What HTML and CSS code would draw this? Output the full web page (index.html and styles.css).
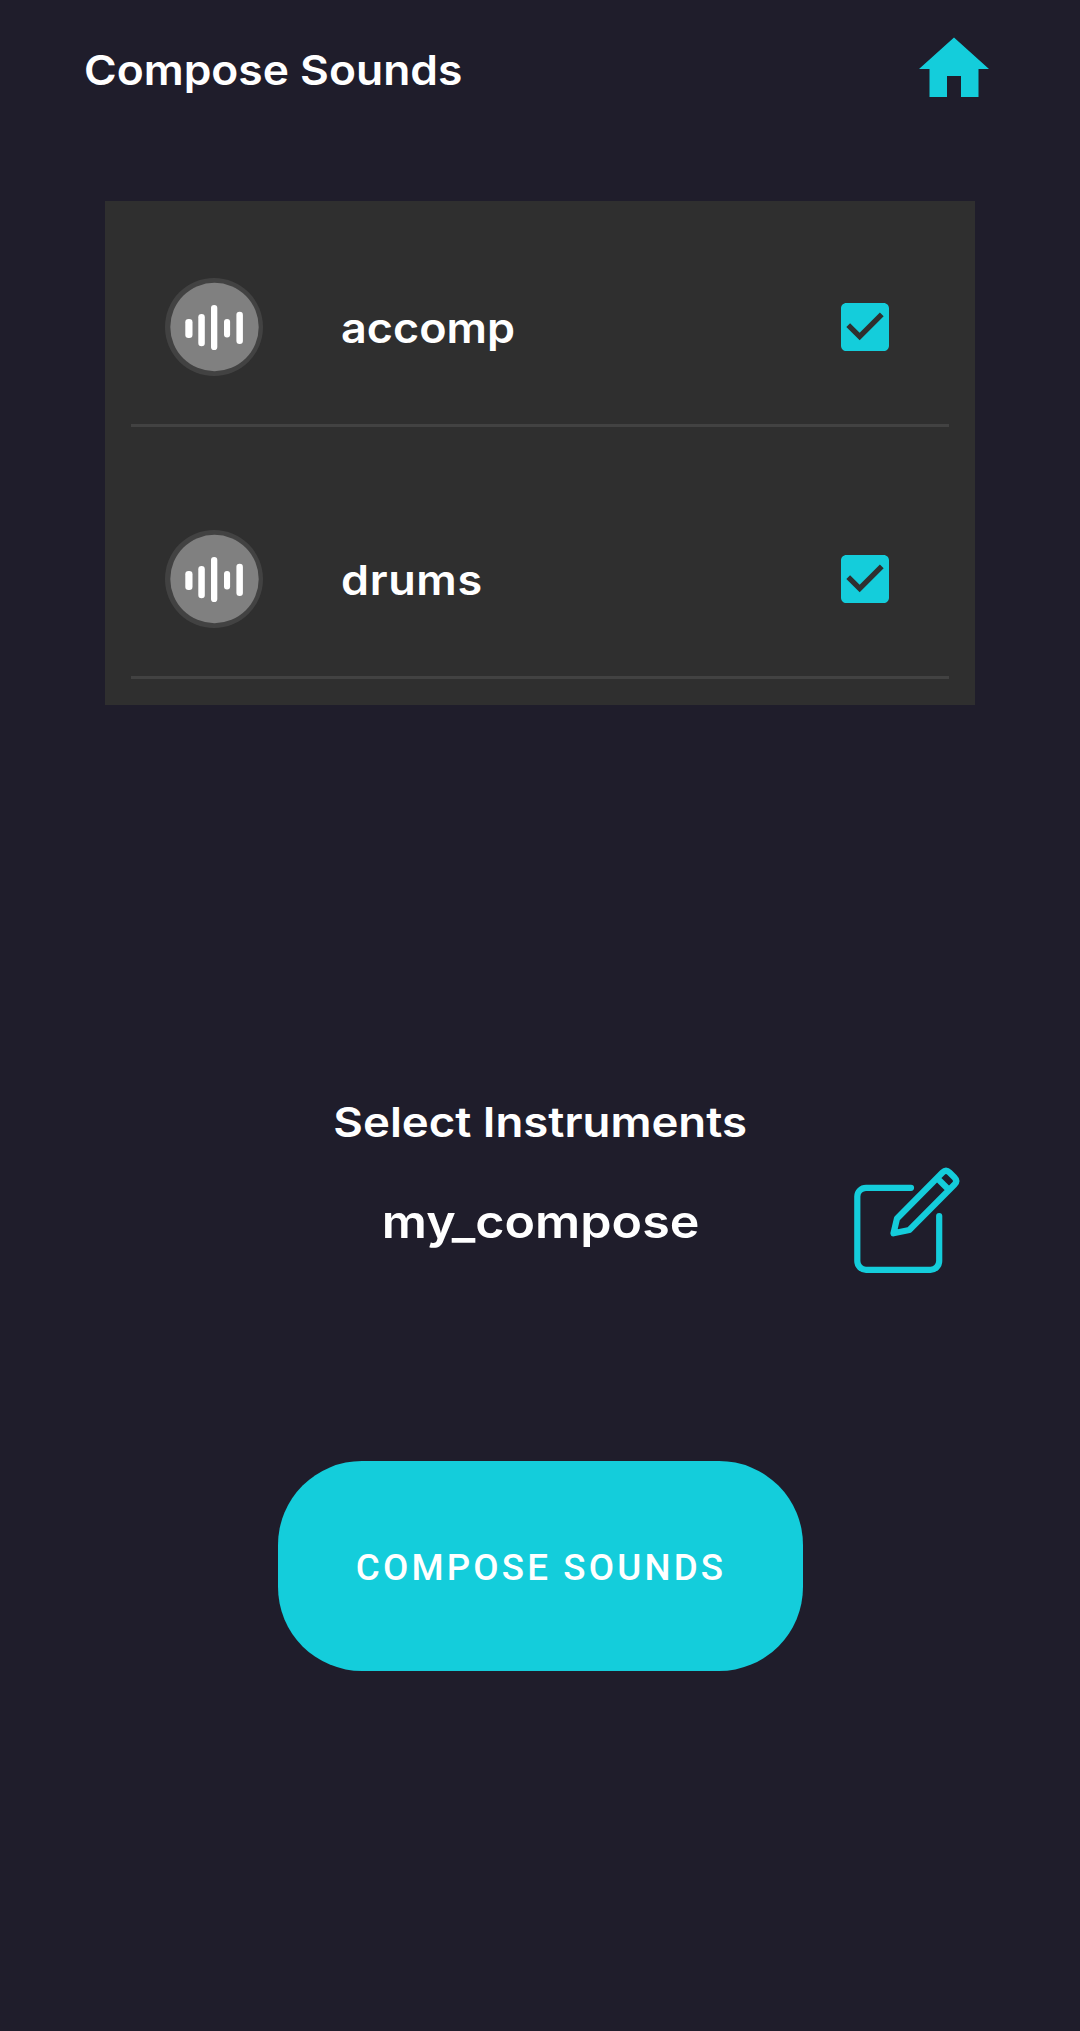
FILE: index.html
```html
<!DOCTYPE html>
<html lang="en">
<head>
<meta charset="utf-8">
<title>Compose Sounds</title>
<link rel="stylesheet" href="styles.css">
</head>
<body>
<svg class="symbols" aria-hidden="true">
  <symbol id="wave" viewBox="0 0 98 98">
    <circle class="wave-ring" cx="49" cy="49" r="49"/>
    <circle class="wave-disc" cx="49.5" cy="49" r="44.2"/>
    <g class="wave-bars">
      <rect x="20.3" y="41" width="7.2" height="19" rx="3.3"/>
      <rect x="33.3" y="36" width="6.5" height="32.3" rx="3.2"/>
      <rect x="46" y="27" width="6.3" height="45" rx="3.1"/>
      <rect x="59" y="41" width="6.1" height="18.4" rx="3"/>
      <rect x="71.4" y="33.7" width="6.5" height="32.3" rx="3.2"/>
    </g>
  </symbol>
  <symbol id="checked" viewBox="0 0 24 24">
    <path d="M19 3H5c-1.11 0-2 .9-2 2v14c0 1.1.89 2 2 2h14c1.11 0 2-.9 2-2V5c0-1.1-.89-2-2-2zm-9 14l-5-5 1.41-1.41L10 14.17l7.59-7.59L19 8l-9 9z"/>
  </symbol>
</svg>
<header class="topbar">
  <h1 class="title">Compose Sounds</h1>
  <svg class="home" viewBox="0 0 24 24"><path d="M10 20v-6h4v6h5v-8h3L12 3 2 12h3v8z"/></svg>
</header>
<main class="content">
  <ul class="tracks">
    <li class="track">
      <svg class="track-icon"><use href="#wave"/></svg>
      <span class="track-name">accomp</span>
      <svg class="check"><use href="#checked"/></svg>
    </li>
    <li class="track">
      <svg class="track-icon"><use href="#wave"/></svg>
      <span class="track-name track-name-wide">drums</span>
      <svg class="check"><use href="#checked"/></svg>
    </li>
  </ul>
  <h2 class="prompt">Select Instruments</h2>
  <div class="name-row">
    <span class="compose-name">my_compose</span>
    <svg class="edit" viewBox="14 17 106 107">
      <path d="M71 37.8H26a8.7 8.7 0 0 0-8.7 8.7v64.6A8.7 8.7 0 0 0 26 119.8h64.5a8.7 8.7 0 0 0 8.7-8.7V66"/>
      <path d="M53.5 83.3L57 68.5L102.5 22.5Q106 19 109.5 22.5L114.5 27.5Q118 31 114.5 34.5L69.3 80Z M97.5 28.5L108.5 39.5"/>
    </svg>
  </div>
  <button class="compose" type="button">COMPOSE SOUNDS</button>
</main>
</body>
</html>
```
FILE: styles.css
```css
* { box-sizing: border-box; }

body {
  margin: 0;
  min-height: 2031px;
  background: #1f1d2b;
  color: #fff;
  font-family: Inter, "Liberation Sans", sans-serif;
  font-weight: 600;
}

.symbols { position: absolute; width: 0; height: 0; }

.topbar {
  display: flex;
  justify-content: space-between;
  height: 201px;
  padding: 27px 84px 0 84px;
}

.title, .prompt {
  margin: 0;
  font-size: 41px;
  font-weight: 600;
  line-height: 60px;
  white-space: nowrap;
}

/* Headings and labels are set slightly extended. */
.title {
  margin-top: 13px;
  transform: scaleX(1.082);
  transform-origin: left;
}

.home { width: 84px; height: 84px; fill: #14cddb; }

.content {
  display: flex;
  flex-direction: column;
  align-items: center;
}

.tracks {
  width: 870px;
  height: 504px;
  margin: 0;
  padding: 0;
  list-style: none;
  background: #2f2f2f;
}

.track {
  display: flex;
  align-items: center;
  height: 226px;
  margin: 0 26px 26px;
  padding: 29px 52px 0 34px;
  border-bottom: 3px solid #424242;
}

.track-icon { width: 98px; height: 98px; }
.wave-ring { fill: #424242; }
.wave-disc { fill: #808080; }
.wave-bars { fill: #fff; }

.track-name {
  margin: 2px auto 0 78px;
  font-size: 41px;
  line-height: 60px;
  transform: scaleX(1.096);
  transform-origin: left;
}

.track-name-wide { letter-spacing: 0.6px; }

.check { width: 64px; height: 64px; fill: #14cddb; }

.prompt { margin-top: 387px; transform: scaleX(1.111); }

.name-row {
  display: grid;
  grid-template-columns: 1fr auto 1fr;
  width: 839px;
  margin-top: 15px;
}

.compose-name {
  grid-column: 2;
  margin-top: 19px;
  padding-left: 2px;
  font-size: 46px;
  line-height: 70px;
  transform: scaleX(1.091);
}

.edit {
  justify-self: end;
  width: 106px;
  height: 107px;
  fill: none;
  stroke: #14cddb;
  stroke-width: 6.2;
  stroke-linecap: round;
  stroke-linejoin: round;
}

.compose {
  width: 525px;
  height: 210px;
  margin-top: 187px;
  padding: 2px 0 0 2px;
  border: 0;
  border-radius: 84px;
  background: #14cddb;
  color: #fff;
  font: 500 36.75px Roboto, "Liberation Sans", sans-serif;
  letter-spacing: 3.15px;
}
```
